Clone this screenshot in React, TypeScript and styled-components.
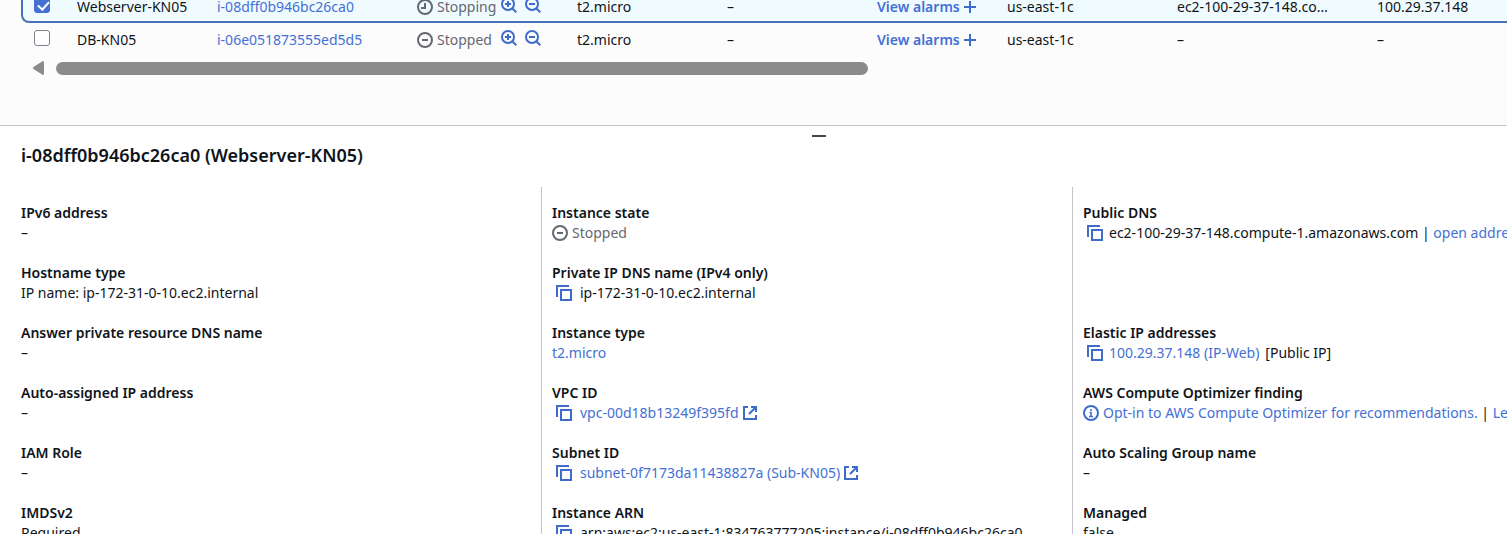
import React from "react";
import styled, { createGlobalStyle, css } from "styled-components";

const colors = {
  link: "#4470d4",
  icon: "#3f6bcb",
  text: "#0f141a",
  muted: "#656871",
  line: "#c1c3c8",
  selected: "#4a70b8",
};

const GlobalStyle = createGlobalStyle`
  * { box-sizing: border-box; }
  html, body, #root { height: 100%; }
  body {
    margin: 0;
    overflow: hidden;
    background: #ffffff;
    color: ${colors.text};
    font-family: "Noto Sans", "Open Sans", sans-serif;
    font-size: 14px;
    line-height: 20px;
  }
`;

const Page = styled.div`
  display: flex;
  flex-direction: column;
  min-width: 1638px;
  height: 100%;
  overflow: hidden;
`;

const ListPane = styled.section`
  flex: none;
  padding: 0 0 50px 21px;
  background: #fcfcfd;
  border-bottom: 1px solid ${colors.line};
`;

/* The list is scrolled, so the first visible row starts above the pane. */
const Table = styled.table`
  width: 100%;
  min-width: 1617px;
  margin-top: -10px;
  table-layout: fixed;
  border-collapse: separate;
  border-spacing: 0;
`;

const Col = styled.col<{ $w?: number }>`
  width: ${(p) => (p.$w ? `${p.$w}px` : "auto")};
`;

const Cell = styled.td`
  height: 33px;
  padding: 0 10px;
  overflow: hidden;
  white-space: nowrap;
  text-overflow: ellipsis;
`;

const Row = styled.tr<{ $selected?: boolean }>`
  ${(p) =>
    p.$selected &&
    css`
      background: #f0fbff;
      & > td {
        border-top: 2px solid ${colors.selected};
        border-bottom: 2px solid ${colors.selected};
      }
      & > td:first-child {
        border-left: 2px solid ${colors.selected};
        border-radius: 8px 0 0 8px;
      }
    `}
  & > td:first-child {
    padding-left: ${(p) => (p.$selected ? 11 : 13)}px;
  }
`;

const Checkbox = styled.input`
  appearance: none;
  display: block;
  width: 16px;
  height: 16px;
  margin: 0 0 4px;
  border: 1px solid #7d818c;
  border-radius: 3px;
  background: #ffffff;
  &:checked {
    border-color: ${colors.link};
    background: ${colors.link};
  }
  &:checked::after {
    content: "";
    display: block;
    width: 5px;
    height: 9px;
    margin: 1px 0 0 5px;
    border: solid #ffffff;
    border-width: 0 2px 2px 0;
    transform: rotate(42deg);
  }
`;

const Link = styled.a<{ $bold?: boolean }>`
  color: ${colors.link};
  font-weight: ${(p) => (p.$bold ? 600 : 400)};
  text-decoration: none;
`;

const Inline = styled.span<{ $gap?: number }>`
  display: flex;
  align-items: center;
  gap: ${(p) => p.$gap ?? 4}px;
  white-space: nowrap;
`;

const Status = styled(Inline)`
  color: ${colors.muted};
`;

const StateCell = styled.div`
  display: flex;
  align-items: center;
`;

const StateText = styled.div`
  width: 84px;
`;

const IconButton = styled.button`
  display: flex;
  margin: 0;
  padding: 0;
  border: 0;
  background: none;
  color: ${colors.icon};
`;

const FilterButtons = styled.div`
  display: flex;
  gap: 8px;
  padding-bottom: 4px;
`;

const Svg = styled.svg`
  display: block;
  flex: none;
  fill: none;
  stroke: currentColor;
  stroke-width: 2;
`;

const BlueSvg = styled(Svg)`
  color: ${colors.icon};
`;

const Scroller = styled.div`
  display: flex;
  align-items: center;
  gap: 12px;
  margin-top: 5px;
  padding-left: 12px;
`;

const ScrollArrow = styled.button`
  display: flex;
  padding: 0;
  border: 0;
  background: none;
  color: #8b8b8b;
`;

const ScrollThumb = styled.div`
  width: calc(50% + 9px);
  height: 13px;
  border-radius: 7px;
  background: #8b8b8b;
`;

const DetailPane = styled.section`
  display: flex;
  flex: 1;
  flex-direction: column;
  min-height: 0;
  overflow: hidden;
`;

const Handle = styled.button`
  flex: none;
  align-self: center;
  width: 14px;
  height: 2px;
  margin: 9px 0 0;
  padding: 0;
  border: 0;
  background: #424650;
`;

const Title = styled.h2`
  margin: 6px 21px 20px;
  font-size: 18px;
  font-weight: 600;
  line-height: 24px;
`;

const Columns = styled.div`
  display: grid;
  grid-template-columns: repeat(3, 1fr);
  padding: 0 35px 0 10px;
`;

const Column = styled.dl`
  display: flex;
  flex-direction: column;
  gap: 20px;
  min-width: 0;
  margin: 0;
  padding: 16px 10px;
  border-left: 1px solid ${colors.line};
  &:first-child {
    border-color: transparent;
  }
`;

const Field = styled.div`
  height: 40px;
`;

const Label = styled.dt`
  font-weight: 600;
`;

const Value = styled.dd`
  margin: 0;
  white-space: nowrap;
`;

const Copyable = styled(Inline)`
  padding-left: 4px;
`;

const StoppedIcon = () => (
  <Svg width="16" height="16" viewBox="0 0 16 16" aria-hidden="true">
    <circle cx="8" cy="8" r="7" />
    <path d="M5 8h6" />
  </Svg>
);

const ClockIcon = () => (
  <Svg width="16" height="16" viewBox="0 0 16 16" aria-hidden="true">
    <circle cx="8" cy="8" r="7" />
    <path d="M8 4v5H4" />
  </Svg>
);

const ZoomIcon = ({ plus }: { plus?: boolean }) => (
  <Svg width="16" height="16" viewBox="0 0 16 16" aria-hidden="true">
    <circle cx="7" cy="7" r="6" />
    <path d="M11.2 11.2 15.2 15.2" />
    <path d={plus ? "M4 7h6M7 4v6" : "M4 7h6"} />
  </Svg>
);

const PlusIcon = () => (
  <BlueSvg width="12" height="12" viewBox="0 0 12 12" aria-hidden="true">
    <path d="M0 6h12M6 0v12" />
  </BlueSvg>
);

const CopyIcon = () => (
  <Svg width="16" height="16" viewBox="0 0 16 16" aria-hidden="true">
    <path d="M1 12V1h12" />
    <path d="M5 5h10v10H5z" />
  </Svg>
);

const ExternalIcon = () => (
  <BlueSvg width="14" height="14" viewBox="0 0 14 14" aria-hidden="true">
    <path d="M5 1H1v12h12V9" />
    <path d="M8 1h5v5M13 1 6 8" />
  </BlueSvg>
);

const InfoIcon = () => (
  <BlueSvg width="16" height="16" viewBox="0 0 16 16" aria-hidden="true">
    <circle cx="8" cy="8" r="7" />
    <path d="M8 4v2M6.500 7.500H8V11M6 11.500h4" strokeWidth="1.5" />
  </BlueSvg>
);

type Instance = {
  name: string;
  id: string;
  state: string;
  dns: string;
  ip: string;
  selected?: boolean;
};

const instances: Instance[] = [
  {
    name: "Webserver-KN05",
    id: "i-08dff0b946bc26ca0",
    state: "Stopping",
    dns: "ec2-100-29-37-148.co…",
    ip: "100.29.37.148",
    selected: true,
  },
  { name: "DB-KN05", id: "i-06e051873555ed5d5", state: "Stopped", dns: "–", ip: "–" },
];

const columnWidths = [46, 140, 200, 160, 150, 150, 130, 170, 200];

const InstanceRow = ({ item }: { item: Instance }) => (
  <Row $selected={item.selected}>
    <Cell>
      <Checkbox type="checkbox" defaultChecked={item.selected} aria-label={`Select ${item.name}`} />
    </Cell>
    <Cell>{item.name}</Cell>
    <Cell>
      <Link href="#instance">{item.id}</Link>
    </Cell>
    <Cell>
      <StateCell>
        <StateText>
          <Status>
            {item.state === "Stopping" ? <ClockIcon /> : <StoppedIcon />}
            {item.state}
          </Status>
        </StateText>
        <FilterButtons>
          <IconButton aria-label="Include state in filter">
            <ZoomIcon plus />
          </IconButton>
          <IconButton aria-label="Exclude state from filter">
            <ZoomIcon />
          </IconButton>
        </FilterButtons>
      </StateCell>
    </Cell>
    <Cell>t2.micro</Cell>
    <Cell>–</Cell>
    <Cell>
      <Inline>
        <Link href="#alarms" $bold>
          View alarms
        </Link>
        <PlusIcon />
      </Inline>
    </Cell>
    <Cell>us-east-1c</Cell>
    <Cell>{item.dns}</Cell>
    <Cell>{item.ip}</Cell>
  </Row>
);

const Item = ({ label, children = "–" }: { label: string; children?: React.ReactNode }) => (
  <Field>
    <Label>{label}</Label>
    <Value>{children}</Value>
  </Field>
);

const Copy = ({ gap = 8, children }: { gap?: number; children: React.ReactNode }) => (
  <Copyable $gap={gap}>
    <IconButton aria-label="Copy">
      <CopyIcon />
    </IconButton>
    <span>{children}</span>
  </Copyable>
);

const External = ({ children }: { children: React.ReactNode }) => (
  <Inline>
    <Link href="#resource">{children}</Link>
    <ExternalIcon />
  </Inline>
);

export default function App() {
  return (
    <>
      <GlobalStyle />
      <Page>
        <ListPane>
          <Table>
            <colgroup>
              {columnWidths.map((w, i) => (
                <Col key={i} $w={w} />
              ))}
              <Col />
            </colgroup>
            <tbody>
              {instances.map((item) => (
                <InstanceRow key={item.id} item={item} />
              ))}
            </tbody>
          </Table>
          <Scroller>
            <ScrollArrow aria-label="Scroll left">
              <svg width="11" height="14" viewBox="0 0 11 14" fill="currentColor" aria-hidden="true">
                <path d="M9.500.3Q11-.3 11 1.200V12.800Q11 14.300 9.500 13.700L.5 8Q-.4 7 .5 6Z" />
              </svg>
            </ScrollArrow>
            <ScrollThumb />
          </Scroller>
        </ListPane>
        <DetailPane>
          <Handle aria-label="Resize panel" />
          <Title>i-08dff0b946bc26ca0 (Webserver-KN05)</Title>
          <Columns>
            <Column>
              <Item label="IPv6 address" />
              <Item label="Hostname type">IP name: ip-172-31-0-10.ec2.internal</Item>
              <Item label="Answer private resource DNS name" />
              <Item label="Auto-assigned IP address" />
              <Item label="IAM Role" />
              <Item label="IMDSv2">Required</Item>
            </Column>
            <Column>
              <Item label="Instance state">
                <Status>
                  <StoppedIcon />
                  Stopped
                </Status>
              </Item>
              <Item label="Private IP DNS name (IPv4 only)">
                <Copy>ip-172-31-0-10.ec2.internal</Copy>
              </Item>
              <Item label="Instance type">
                <Link href="#type">t2.micro</Link>
              </Item>
              <Item label="VPC ID">
                <Copy>
                  <External>vpc-00d18b13249f395fd</External>
                </Copy>
              </Item>
              <Item label="Subnet ID">
                <Copy>
                  <External>subnet-0f7173da11438827a (Sub-KN05)</External>
                </Copy>
              </Item>
              <Item label="Instance ARN">
                <Copy>arn:aws:ec2:us-east-1:834763777205:instance/i-08dff0b946bc26ca0</Copy>
              </Item>
            </Column>
            <Column>
              <Item label="Public DNS">
                <Copy gap={6}>
                  ec2-100-29-37-148.compute-1.amazonaws.com | <Link href="#open">open address</Link>
                </Copy>
              </Item>
              <Field />
              <Item label="Elastic IP addresses">
                <Copy gap={6}>
                  <Inline $gap={6}>
                    <Link href="#eip">100.29.37.148 (IP-Web)</Link>
                    <span>[Public IP]</span>
                  </Inline>
                </Copy>
              </Item>
              <Item label="AWS Compute Optimizer finding">
                <Inline>
                  <InfoIcon />
                  <span>
                    <Link href="#optin">Opt-in to AWS Compute Optimizer for recommendations.</Link> |{" "}
                    <Link href="#learn">Learn more</Link>
                  </span>
                </Inline>
              </Item>
              <Item label="Auto Scaling Group name" />
              <Item label="Managed">false</Item>
            </Column>
          </Columns>
        </DetailPane>
      </Page>
    </>
  );
}
